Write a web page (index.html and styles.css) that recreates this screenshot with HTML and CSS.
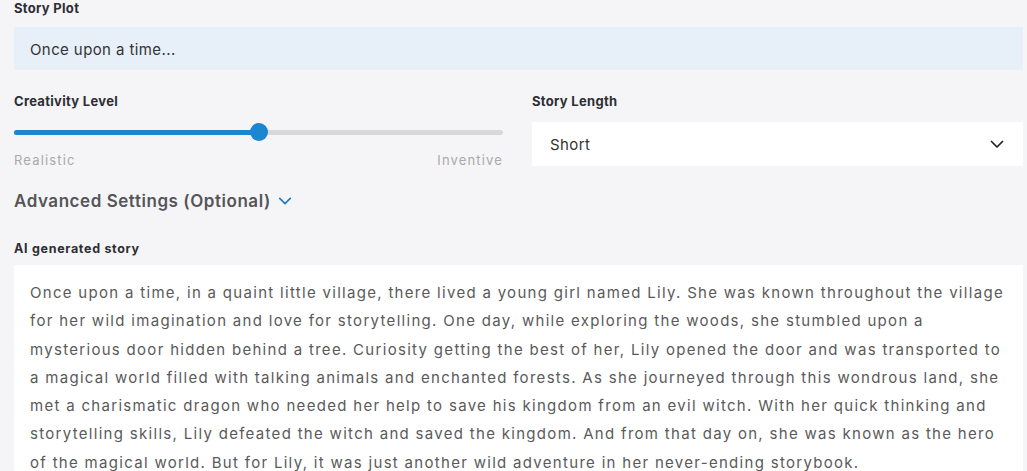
FILE: index.html
```html
<!DOCTYPE html>
<html lang="en">
<head>
<meta charset="utf-8">
<title>Story Generator</title>
<link rel="stylesheet" href="styles.css">
</head>
<body>
<main class="page">
  <section class="field">
    <label class="label">Story Plot</label>
    <div class="plot-input">Once upon a time...</div>
  </section>

  <section class="settings">
    <div class="field">
      <label class="label">Creativity Level</label>
      <div class="slider">
        <div class="track">
          <div class="fill" style="width: 50.2%"><span class="thumb"></span></div>
        </div>
      </div>
      <div class="slider-ends"><span>Realistic</span><span>Inventive</span></div>
    </div>
    <div class="field">
      <label class="label label-length">Story Length</label>
      <div class="select">
        <span>Short</span>
        <svg class="select-chevron" viewBox="0 0 16 16" width="16" height="16"><path d="M2.5 5.5 L8 11 L13.5 5.5" fill="none" stroke="#222" stroke-width="1.7" stroke-linecap="round" stroke-linejoin="round"/></svg>
      </div>
    </div>
  </section>

  <div class="advanced">
    <span>Advanced Settings (Optional)</span>
    <svg class="adv-chevron" viewBox="0 0 16 16" width="14" height="14"><path d="M2 5 L8 11 L14 5" fill="none" stroke="#1f7fc4" stroke-width="2" stroke-linecap="round" stroke-linejoin="round"/></svg>
  </div>

  <section class="field story-field">
    <label class="label small">AI generated story</label>
    <div class="story">Once upon a time, in a quaint little village, there lived a young girl named Lily. She was known throughout the village for her wild imagination and love for storytelling. One day, while exploring the woods, she stumbled upon a mysterious door hidden behind a tree. Curiosity getting the best of her, Lily opened the door and was transported to a magical world filled with talking animals and enchanted forests. As she journeyed through this wondrous land, she met a charismatic dragon who needed her help to save his kingdom from an evil witch. With her quick thinking and storytelling skills, Lily defeated the witch and saved the kingdom. And from that day on, she was known as the hero of the magical world. But for Lily, it was just another wild adventure in her never-ending storybook.</div>
  </section>
</main>
</body>
</html>
```

FILE: styles.css
```css
html, body {
  margin: 0;
  padding: 0;
  background: #f5f5f7;
  font-family: Inter, "Open Sans", sans-serif;
  color: #333;
}

.page {
  padding: 0 4px 0 14px;
}

.field {
  display: flex;
  flex-direction: column;
}

.label {
  font-size: 13px;
  font-weight: 700;
  line-height: 16px;
  color: #2e2e33;
  letter-spacing: 0.3px;
}

.label.small {
  font-size: 12.5px;
  letter-spacing: 0.7px;
}

.plot-input {
  margin-top: 11px;
  height: 43px;
  display: flex;
  align-items: center;
  padding: 2px 0 0 16px;
  box-sizing: border-box;
  background: #e7f0f9;
  font-size: 15px;
  letter-spacing: 0.4px;
  color: #333;
}

.settings {
  margin-top: 23px;
  display: grid;
  grid-template-columns: 489px 1fr;
  column-gap: 29px;
}

.slider {
  margin-top: 14px;
  height: 18px;
  display: flex;
  align-items: center;
}

.track {
  width: 100%;
  height: 5px;
  border-radius: 3px;
  background: #d8d8da;
}

.fill {
  position: relative;
  height: 100%;
  border-radius: 3px;
  background: #1b87d0;
}

.thumb {
  position: absolute;
  right: -9px;
  top: -6.5px;
  width: 18px;
  height: 18px;
  border-radius: 50%;
  background: #1b87d0;
}

.slider-ends {
  margin-top: 11px;
  display: flex;
  justify-content: space-between;
  font-size: 13px;
  line-height: 16px;
  letter-spacing: 1.15px;
  color: #a9a9ad;
}

.select {
  margin-top: 13px;
  height: 44px;
  background: #fff;
  display: flex;
  align-items: center;
  justify-content: space-between;
  padding: 0 18px 0 18px;
  font-size: 15px;
  letter-spacing: 0.4px;
  color: #333;
}

.advanced {
  margin-top: 22px;
  display: flex;
  align-items: center;
  gap: 7px;
  font-size: 17px;
  font-weight: 600;
  line-height: 22px;
  letter-spacing: 0.55px;
  color: #555559;
}

.story-field {
  margin-top: 29px;
}

.story {
  margin-top: 8px;
  background: #fff;
  padding: 14px 16px 20px 16px;
  font-size: 15px;
  line-height: 28.3px;
  letter-spacing: 1.3px;
  color: #5a5a5a;
  font-weight: 400;
}
```
